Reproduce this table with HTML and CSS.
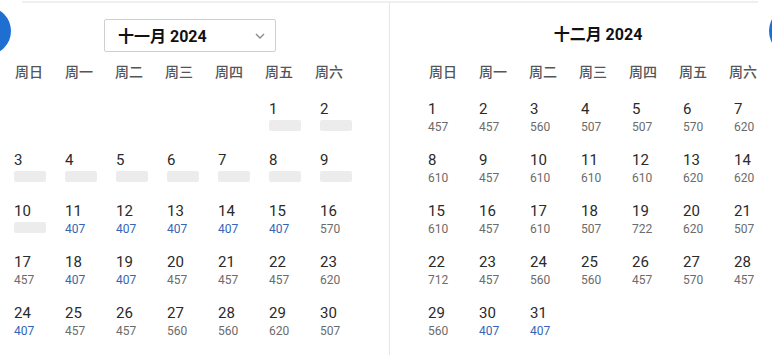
FILE: index.html
```html
<!DOCTYPE html>
<html lang="zh">
<head>
<meta charset="utf-8">
<link rel="stylesheet" href="styles.css">
</head>
<body>
<div class="cal">
  <button class="nav nav-prev" aria-label="上个月"></button>
  <button class="nav nav-next" aria-label="下个月"></button>
  <div class="topline"></div>
  <div class="months">
    <section class="month month-left">
      <div class="month-head">
        <div class="select">
          <span class="select-text">十一月 2024</span>
          <svg class="chev" width="10" height="6" viewBox="0 0 10 6"><polyline points="1,1 5,5 9,1" fill="none" stroke="#8a8a8a" stroke-width="1.4"/></svg>
        </div>
      </div>
      <div class="weekdays"><span>周日</span><span>周一</span><span>周二</span><span>周三</span><span>周四</span><span>周五</span><span>周六</span></div>
      <div class="days">
        <div class="day empty"></div><div class="day empty"></div><div class="day empty"></div><div class="day empty"></div><div class="day empty"></div>
        <div class="day"><span class="num">1</span><span class="ph"></span></div>
        <div class="day"><span class="num">2</span><span class="ph"></span></div>
        <div class="day"><span class="num">3</span><span class="ph"></span></div>
        <div class="day"><span class="num">4</span><span class="ph"></span></div>
        <div class="day"><span class="num">5</span><span class="ph"></span></div>
        <div class="day"><span class="num">6</span><span class="ph"></span></div>
        <div class="day"><span class="num">7</span><span class="ph"></span></div>
        <div class="day"><span class="num">8</span><span class="ph"></span></div>
        <div class="day"><span class="num">9</span><span class="ph"></span></div>
        <div class="day"><span class="num">10</span><span class="ph"></span></div>
        <div class="day"><span class="num">11</span><span class="price low">407</span></div>
        <div class="day"><span class="num">12</span><span class="price low">407</span></div>
        <div class="day"><span class="num">13</span><span class="price low">407</span></div>
        <div class="day"><span class="num">14</span><span class="price low">407</span></div>
        <div class="day"><span class="num">15</span><span class="price low">407</span></div>
        <div class="day"><span class="num">16</span><span class="price">570</span></div>
        <div class="day"><span class="num">17</span><span class="price">457</span></div>
        <div class="day"><span class="num">18</span><span class="price low">407</span></div>
        <div class="day"><span class="num">19</span><span class="price low">407</span></div>
        <div class="day"><span class="num">20</span><span class="price">457</span></div>
        <div class="day"><span class="num">21</span><span class="price">457</span></div>
        <div class="day"><span class="num">22</span><span class="price">457</span></div>
        <div class="day"><span class="num">23</span><span class="price">620</span></div>
        <div class="day"><span class="num">24</span><span class="price low">407</span></div>
        <div class="day"><span class="num">25</span><span class="price">457</span></div>
        <div class="day"><span class="num">26</span><span class="price">457</span></div>
        <div class="day"><span class="num">27</span><span class="price">560</span></div>
        <div class="day"><span class="num">28</span><span class="price">560</span></div>
        <div class="day"><span class="num">29</span><span class="price">620</span></div>
        <div class="day"><span class="num">30</span><span class="price">507</span></div>
      </div>
    </section>
    <section class="month month-right">
      <div class="month-head head-right">
        <h2 class="title">十二月 2024</h2>
      </div>
      <div class="weekdays"><span>周日</span><span>周一</span><span>周二</span><span>周三</span><span>周四</span><span>周五</span><span>周六</span></div>
      <div class="days">
        <div class="day"><span class="num">1</span><span class="price">457</span></div>
        <div class="day"><span class="num">2</span><span class="price">457</span></div>
        <div class="day"><span class="num">3</span><span class="price">560</span></div>
        <div class="day"><span class="num">4</span><span class="price">507</span></div>
        <div class="day"><span class="num">5</span><span class="price">507</span></div>
        <div class="day"><span class="num">6</span><span class="price">570</span></div>
        <div class="day"><span class="num">7</span><span class="price">620</span></div>
        <div class="day"><span class="num">8</span><span class="price">610</span></div>
        <div class="day"><span class="num">9</span><span class="price">457</span></div>
        <div class="day"><span class="num">10</span><span class="price">610</span></div>
        <div class="day"><span class="num">11</span><span class="price">610</span></div>
        <div class="day"><span class="num">12</span><span class="price">610</span></div>
        <div class="day"><span class="num">13</span><span class="price">620</span></div>
        <div class="day"><span class="num">14</span><span class="price">620</span></div>
        <div class="day"><span class="num">15</span><span class="price">610</span></div>
        <div class="day"><span class="num">16</span><span class="price">457</span></div>
        <div class="day"><span class="num">17</span><span class="price">610</span></div>
        <div class="day"><span class="num">18</span><span class="price">507</span></div>
        <div class="day"><span class="num">19</span><span class="price">722</span></div>
        <div class="day"><span class="num">20</span><span class="price">620</span></div>
        <div class="day"><span class="num">21</span><span class="price">507</span></div>
        <div class="day"><span class="num">22</span><span class="price">712</span></div>
        <div class="day"><span class="num">23</span><span class="price">457</span></div>
        <div class="day"><span class="num">24</span><span class="price">560</span></div>
        <div class="day"><span class="num">25</span><span class="price">560</span></div>
        <div class="day"><span class="num">26</span><span class="price">457</span></div>
        <div class="day"><span class="num">27</span><span class="price">570</span></div>
        <div class="day"><span class="num">28</span><span class="price">457</span></div>
        <div class="day"><span class="num">29</span><span class="price">560</span></div>
        <div class="day"><span class="num">30</span><span class="price low">407</span></div>
        <div class="day"><span class="num">31</span><span class="price low">407</span></div>
      </div>
    </section>
  </div>
</div>
</body>
</html>
```

FILE: styles.css
```css
html, body {
  margin: 0;
  padding: 0;
  background: #fff;
}

body {
  font-family: Roboto, "Noto Sans CJK SC", sans-serif;
  color: #222;
}

.cal {
  position: relative;
  width: 772px;
  height: 355px;
  overflow: hidden;
  background: #fff;
}

.nav {
  position: absolute;
  top: 7px;
  width: 48px;
  height: 48px;
  border: 0;
  padding: 0;
  border-radius: 50%;
  background: #1f6fd3;
  z-index: 2;
}

.nav-prev { left: -37px; }
.nav-next { left: 769px; }

.topline {
  height: 2px;
  margin: 1px 14px 0 22px;
  background: #efefef;
}

.months {
  display: flex;
  height: 352px;
}

.month {
  flex: 0 0 auto;
}

.month-left {
  width: 374px;
  padding-left: 15px;
  border-right: 1px solid #e6e6e6;
}

.month-right {
  width: 350px;
  padding-left: 39px;
}

.month-head {
  width: 350px;
  padding-top: 16px;
  height: 33px;
  display: flex;
  justify-content: center;
}

.head-right {
  width: 338px;
}

.select {
  box-sizing: border-box;
  width: 172px;
  height: 33px;
  border: 1px solid #cfcfcf;
  border-radius: 2px;
  display: flex;
  align-items: center;
  justify-content: space-between;
  padding: 0 10px 1px 13px;
}

.select-text,
.title {
  font-family: Roboto, "Noto Sans CJK SC", sans-serif;
  font-size: 16px;
  font-weight: 700;
  color: #111;
}

.title {
  margin: 0;
  line-height: 31px;
}

.chev {
  display: block;
  margin-top: 1px;
}

.weekdays {
  width: 350px;
  display: grid;
  grid-template-columns: repeat(7, 50px);
  margin-top: 9px;
  height: 20px;
  line-height: 20px;
  font-family: "Noto Sans CJK SC", sans-serif;
  font-size: 14px;
  font-weight: 500;
  color: #555;
}

.days {
  width: 357px;
  display: grid;
  grid-template-columns: repeat(7, 51px);
  grid-auto-rows: 35px;
  row-gap: 16px;
  margin: 18px 0 0 -1px;
}

.day {
  display: flex;
  flex-direction: column;
  align-items: flex-start;
}

.num {
  font-size: 15px;
  line-height: 21px;
  height: 21px;
  color: #2a2a2a;
}

.price {
  font-size: 12px;
  line-height: 14px;
  color: #6b6b6b;
}

.price.low {
  color: #3564b7;
}

.ph {
  display: block;
  width: 32px;
  height: 11px;
  background: #ececec;
  border-radius: 2px;
}
```
